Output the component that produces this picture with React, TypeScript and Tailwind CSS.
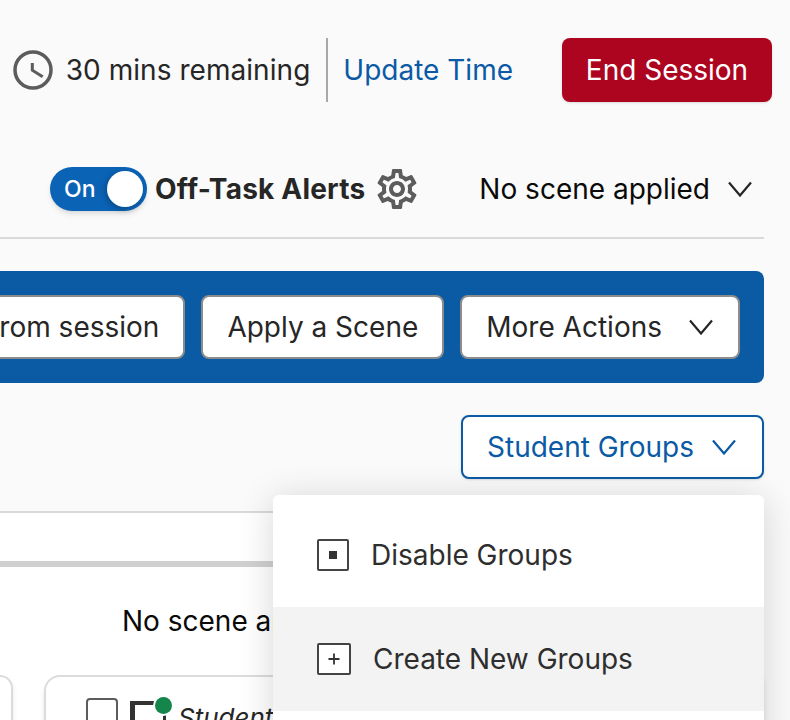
import { MdOutlineSettings } from "react-icons/md";

function ClockIcon() {
  return (
    <svg width="40" height="40" viewBox="0 0 40 40" fill="none" stroke="#5c5c5c" className="shrink-0">
      <circle cx="20" cy="20" r="18" strokeWidth="3.5" />
      <path d="M19.3 13v7.2l10.4 6.5" strokeWidth="3" />
    </svg>
  );
}

function Chevron({ className }: { className?: string }) {
  return (
    <svg width="24" height="16" viewBox="0 0 24 16" fill="none" stroke="currentColor" strokeWidth="2.2" className={className}>
      <path d="M1 1.5l11 13 11-13" />
    </svg>
  );
}

function BarButton({ label, chevron }: { label: string; chevron?: boolean }) {
  return (
    <button className="h-16 px-6 shrink-0 flex items-center gap-[27px] bg-white border-2 border-[#8c8c8c] rounded-lg text-[#262626] text-[28px]">
      {label}
      {chevron && <Chevron className="mr-[1px]" />}
    </button>
  );
}

export default function App() {
  return (
    <div className="relative w-[790px] h-[720px] overflow-hidden bg-[#fafafa] font-['Inter',sans-serif]">
      {/* Session bar */}
      <div className="flex items-center justify-end h-16 mt-[38px] pr-[18px]">
        <ClockIcon />
        <span className="ml-[13px] text-[28px] tracking-[0.05px] text-[#262626] whitespace-nowrap">30 mins remaining</span>
        <div className="w-[2px] h-16 ml-4 mr-[15px] bg-[#a8a8a8]" />
        <a className="text-[28px] text-[#0b5aa5] whitespace-nowrap">Update Time</a>
        <button className="ml-[49px] w-[210px] h-16 rounded-lg bg-[#ad0420] text-white text-[28px] shadow-sm">End Session</button>
      </div>

      {/* Alerts + scene */}
      <div className="flex items-center h-11 mt-[65px] pl-[50px] pr-[26px]">
        <div className="relative w-[97px] h-11 rounded-full bg-[#0b63b6] shadow-md">
          <span className="absolute left-[14px] top-[6px] text-[23px] leading-8 font-medium text-white">On</span>
          <span className="absolute right-1 top-1 w-9 h-9 rounded-full bg-white shadow-[-2px_2px_6px_rgba(0,0,0,0.25)]" />
        </div>
        <span className="ml-2 text-[28px] font-bold tracking-[0.2px] text-[#262626] whitespace-nowrap">Off-Task Alerts</span>
        <MdOutlineSettings size={48} className="ml-[8px] -my-1 text-[#5c5c5c]" />
        <span className="ml-auto text-[28px] text-[#0a0a0a] whitespace-nowrap">No scene applied</span>
        <Chevron className="ml-[18px] mr-3 text-[#262626]" />
      </div>

      <div className="h-[2px] w-[764px] mt-[26px] bg-[#d9d9d9]" />

      {/* Action bar */}
      <div className="w-[764px] h-[112px] mt-8 flex items-center justify-end gap-4 pr-6 overflow-hidden rounded-r-lg bg-[#0a5aa4]">
        <BarButton label="Remove from session" />
        <BarButton label="Apply a Scene" />
        <BarButton label="More Actions" chevron />
      </div>

      <div className="w-[764px] flex justify-end mt-8">
        <button className="w-[303px] h-16 pl-6 pr-[26px] flex items-center justify-between bg-white border-2 border-[#0a5aa4] rounded-lg text-[#0a5aa4] text-[28px] shadow-sm">
          Student Groups
          <Chevron />
        </button>
      </div>

      {/* Roster panel */}
      <div className="w-[764px] h-[209px] mt-8 bg-white border-t-2 border-[#d9d9d9]">
        <div className="h-[6px] mt-12 bg-[#d0d0d0]" />
        <p className="mt-[36px] pl-[122px] text-[28px] leading-9 text-[#0a0a0a] whitespace-nowrap">No scene applied</p>
        <div className="flex mt-[36px] gap-[31px]">
          <div className="w-[13px] h-16 bg-white border-2 border-l-0 border-[#dcdcdc] rounded-tr-2xl shadow-md" />
          <div className="flex-1 h-16 pl-[40px] pt-[21px] flex items-start bg-white border-2 border-[#dcdcdc] rounded-tl-2xl shadow-md">
            <span className="w-8 h-8 shrink-0 border-2 border-[#5c5c5c] rounded" />
            <span className="relative ml-3 mt-[3px] w-9 h-8 shrink-0 border-t-4 border-l-[5px] border-r-[3px] border-[#333333]">
              <span className="absolute left-5 -top-2 w-[17px] h-[17px] rounded-full bg-[#14854b] ring-2 ring-white" />
            </span>
            <span className="ml-3 text-[26px] italic text-[#262626] whitespace-nowrap">Student</span>
          </div>
        </div>
      </div>

      {/* Student Groups menu */}
      <div className="absolute left-[273px] top-[495px] w-[491px] h-[300px] bg-white rounded-md shadow-[0_4px_36px_rgba(0,0,0,0.16)]">
        <div className="h-[112px] pt-2 pl-[44px] flex items-center gap-[22px] text-[28px] text-[#2e2e2e]">
          <span className="w-[32px] h-[32px] flex items-center justify-center border-2 border-[#444444] rounded-[2px]">
            <span className="w-2 h-2 bg-[#333333]" />
          </span>
          Disable Groups
        </div>
        <div className="h-[104px] pl-[44px] flex items-center gap-[22px] bg-[#f3f3f3] text-[28px] text-[#2e2e2e]">
          <span className="w-[34px] h-[32px] flex items-center justify-center border-2 border-[#444444] rounded-[2px] bg-white">
            <svg width="12" height="12" viewBox="0 0 12 12" stroke="#333333" strokeWidth="1.8">
              <path d="M6 0.5v11M0.5 6h11" />
            </svg>
          </span>
          Create New Groups
        </div>
      </div>
    </div>
  );
}
